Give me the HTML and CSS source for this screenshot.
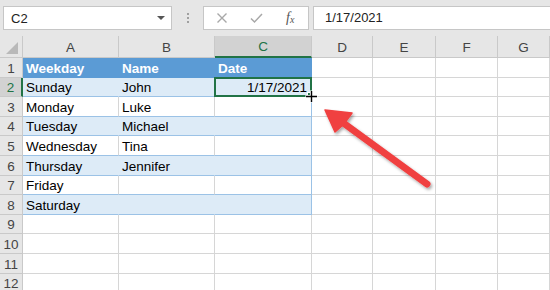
FILE: index.html
```html
<!DOCTYPE html>
<html>
<head>
<meta charset="utf-8">
<link rel="stylesheet" href="styles.css">
</head>
<body>
<div class="app">
  <div class="toolbar">
    <div class="namebox"><span>C2</span><span class="caret"></span></div>
    <div class="dots"><i></i><i></i><i></i></div>
    <div class="fbtns">
      <svg class="ic" width="12" height="12" viewBox="0 0 12 12"><path d="M1.5 1.5 L10.5 10.5 M10.5 1.5 L1.5 10.5" stroke="#a8a8a8" stroke-width="1.4" fill="none"/></svg>
      <svg class="ic" width="13" height="12" viewBox="0 0 13 12"><path d="M1 6.5 L4.5 10 L12 2" stroke="#a8a8a8" stroke-width="1.5" fill="none"/></svg>
      <span class="fx">f<sub>x</sub></span>
    </div>
    <div class="formula">1/17/2021</div>
  </div>
  <div class="grid">
    <div class="hd corner"><span class="tri"></span></div>
    <div class="hd">A</div><div class="hd">B</div><div class="hd sel">C</div><div class="hd">D</div><div class="hd">E</div><div class="hd">F</div><div class="hd">G</div>

    <div class="rh">1</div>
    <div class="c th">Weekday</div><div class="c th">Name</div><div class="c th last">Date</div><div class="c"></div><div class="c"></div><div class="c"></div><div class="c"></div>

    <div class="rh sel">2</div>
    <div class="c tb blue">Sunday</div><div class="c tb blue">John</div><div class="c tb blue last active num">1/17/2021<span class="handle"></span><svg class="cursor" width="13" height="13" viewBox="0 0 13 13"><path d="M6.5 0.5 V12.5 M0.5 6.5 H12.5" stroke="#fff" stroke-width="3.2"/><path d="M6.5 1 V12 M1 6.5 H12" stroke="#000" stroke-width="1.4"/></svg></div><div class="c"></div><div class="c"></div><div class="c"></div><div class="c"></div>

    <div class="rh">3</div>
    <div class="c tb">Monday</div><div class="c tb">Luke</div><div class="c tb last"></div><div class="c"></div><div class="c"></div><div class="c"></div><div class="c"></div>

    <div class="rh">4</div>
    <div class="c tb blue">Tuesday</div><div class="c tb blue">Michael</div><div class="c tb blue last"></div><div class="c"></div><div class="c"></div><div class="c"></div><div class="c"></div>

    <div class="rh">5</div>
    <div class="c tb">Wednesday</div><div class="c tb">Tina</div><div class="c tb last"></div><div class="c"></div><div class="c"></div><div class="c"></div><div class="c"></div>

    <div class="rh">6</div>
    <div class="c tb blue">Thursday</div><div class="c tb blue">Jennifer</div><div class="c tb blue last"></div><div class="c"></div><div class="c"></div><div class="c"></div><div class="c"></div>

    <div class="rh">7</div>
    <div class="c tb">Friday</div><div class="c tb"></div><div class="c tb last"></div><div class="c"></div><div class="c"></div><div class="c"></div><div class="c"></div>

    <div class="rh">8</div>
    <div class="c tb blue bot">Saturday</div><div class="c tb blue bot"></div><div class="c tb blue last bot"></div><div class="c"></div><div class="c"></div><div class="c"></div><div class="c"></div>

    <div class="rh">9</div>
    <div class="c"></div><div class="c"></div><div class="c"></div><div class="c"></div><div class="c"></div><div class="c"></div><div class="c"></div>
    <div class="rh">10</div>
    <div class="c"></div><div class="c"></div><div class="c"></div><div class="c"></div><div class="c"></div><div class="c"></div><div class="c"></div>
    <div class="rh">11</div>
    <div class="c"></div><div class="c"></div><div class="c"></div><div class="c"></div><div class="c"></div><div class="c"></div><div class="c"></div>
    <div class="rh">12</div>
    <div class="c"></div><div class="c"></div><div class="c"></div><div class="c"></div><div class="c"></div><div class="c"></div><div class="c"></div>
  </div>
  <svg class="arrow" width="550" height="290" viewBox="0 0 550 290">
    <defs>
      <filter id="sh" x="-20%" y="-20%" width="140%" height="140%">
        <feDropShadow dx="1.5" dy="2" stdDeviation="1.6" flood-color="#000" flood-opacity="0.35"/>
      </filter>
    </defs>
    <g filter="url(#sh)">
      <line x1="342" y1="122" x2="427" y2="184" stroke="#f04040" stroke-width="7" stroke-linecap="round"/>
      <path d="M325 110 L352 113 L344 124 L335 132 Z" fill="#f04040" stroke="#f04040" stroke-width="1.5" stroke-linejoin="round"/>
    </g>
  </svg>
</div>
</body>
</html>
```

FILE: styles.css
```css
html, body {
  margin: 0;
  padding: 0;
}
body {
  width: 550px;
  height: 290px;
  overflow: hidden;
  background: #fff;
  font-family: "Liberation Sans", Arial, sans-serif;
}
.app {
  position: relative;
  width: 550px;
  height: 290px;
  overflow: hidden;
}
.toolbar {
  height: 36px;
  background: #e6e6e6;
  display: flex;
  align-items: flex-start;
  padding-top: 6px;
  box-sizing: border-box;
}
.namebox {
  margin-left: 3px;
  width: 169px;
  height: 24px;
  box-sizing: border-box;
  background: #fff;
  border: 1px solid #c6c6c6;
  display: flex;
  align-items: center;
  justify-content: space-between;
  padding: 0 6px 0 7px;
  font-size: 13px;
  color: #222;
}
.caret {
  width: 0;
  height: 0;
  border-left: 4px solid transparent;
  border-right: 4px solid transparent;
  border-top: 4px solid #555;
}
.dots {
  width: 31px;
  height: 24px;
  display: flex;
  flex-direction: column;
  align-items: center;
  justify-content: center;
  gap: 2px;
}
.dots i {
  display: block;
  width: 2px;
  height: 2px;
  background: #a0a0a0;
}
.fbtns {
  width: 106px;
  height: 24px;
  box-sizing: border-box;
  background: #fff;
  border: 1px solid #c6c6c6;
  display: flex;
  align-items: center;
  padding-left: 12px;
  gap: 22px;
}
.fx {
  font-family: "Liberation Serif", serif;
  font-style: italic;
  font-size: 14px;
  color: #555;
  margin-left: 1px;
}
.fx sub {
  font-size: 10px;
  vertical-align: -1px;
}
.formula {
  margin-left: 4px;
  flex: 1;
  height: 24px;
  box-sizing: border-box;
  background: #fff;
  border: 1px solid #c6c6c6;
  border-right: none;
  padding-left: 11px;
  font-size: 13px;
  line-height: 22px;
  color: #222;
}
.grid {
  display: grid;
  grid-template-columns: 23px 96px 96px 97px 61px 63px 62px 1fr;
  grid-template-rows: 22px repeat(12, 19.6px);
  background: #fff;
}
.hd {
  background: #e6e6e6;
  border-right: 1px solid #c9c9c9;
  border-bottom: 1px solid #c9c9c9;
  box-sizing: border-box;
  font-size: 13.5px;
  color: #444;
  display: flex;
  align-items: center;
  justify-content: center;
  padding-top: 1px;
}
.hd.sel {
  background: #d2d2d2;
  color: #217346;
  border-bottom: 2px solid #217346;
}
.corner {
  position: relative;
}
.tri {
  position: absolute;
  right: 4px;
  bottom: 3px;
  width: 0;
  height: 0;
  border-left: 12px solid transparent;
  border-bottom: 12px solid #b9b9b9;
}
.rh {
  background: #e6e6e6;
  border-right: 1px solid #c9c9c9;
  border-bottom: 1px solid #c9c9c9;
  box-sizing: border-box;
  font-size: 13.5px;
  color: #444;
  display: flex;
  align-items: flex-end;
  justify-content: center;
  padding-bottom: 1px;
}
.rh.sel {
  background: #d2d2d2;
  color: #217346;
  border-right: 2px solid #217346;
}
.c {
  border-right: 1px solid #d6d6d6;
  border-bottom: 1px solid #d6d6d6;
  box-sizing: border-box;
  font-size: 13.5px;
  color: #000;
  padding-left: 3px;
  padding-bottom: 1px;
  display: flex;
  align-items: flex-end;
  white-space: nowrap;
}
.c.th {
  background: #5b9bd5;
  color: #fff;
  font-weight: bold;
  border-right-color: #5b9bd5;
  border-bottom: 1px solid #5b9bd5;
}
.c.tb {
  border-bottom: 1px solid #9bc2e6;
}
.c.blue {
  background: #ddebf7;
  border-right-color: #ddebf7;
}
.c.last {
  border-right: 1px solid #9bc2e6;
}
.c.th.last {
  border-right-color: #5b9bd5;
}
.c.num {
  justify-content: flex-end;
  padding-right: 4px;
}
.active {
  position: relative;
}
.active::after {
  content: "";
  position: absolute;
  left: -1px;
  top: -1px;
  right: -1px;
  bottom: -1px;
  border: 2px solid #217346;
  pointer-events: none;
}
.handle {
  position: absolute;
  right: -3px;
  bottom: -3px;
  width: 5px;
  height: 5px;
  background: #217346;
  border: 1px solid #fff;
  z-index: 2;
}
.cursor {
  position: absolute;
  right: -7px;
  bottom: -7px;
  z-index: 3;
}
.arrow {
  position: absolute;
  left: 0;
  top: 0;
  pointer-events: none;
}
```
